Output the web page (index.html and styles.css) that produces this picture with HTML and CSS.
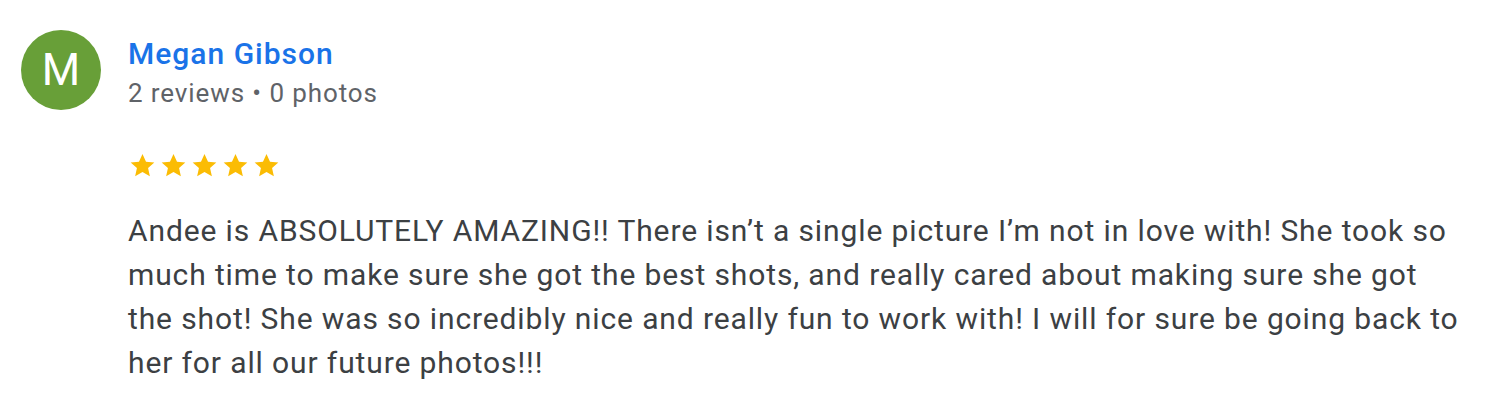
FILE: index.html
```html
<!DOCTYPE html>
<html>
<head>
<meta charset="utf-8">
<link rel="stylesheet" href="styles.css">
</head>
<body>
<div class="review">
  <div class="header">
    <div class="avatar">M</div>
    <div class="meta">
      <div class="name">Megan Gibson</div>
      <div class="sub">2 reviews • 0 photos</div>
    </div>
  </div>
  <div class="body">
    <div class="stars">
      <svg viewBox="0 0 24 24"><path d="M12 2.5l2.9 6.3 6.9.7-5.2 4.6 1.5 6.8L12 17.4l-6.1 3.5 1.5-6.8-5.2-4.6 6.9-.7z"/></svg>
      <svg viewBox="0 0 24 24"><path d="M12 2.5l2.9 6.3 6.9.7-5.2 4.6 1.5 6.8L12 17.4l-6.1 3.5 1.5-6.8-5.2-4.6 6.9-.7z"/></svg>
      <svg viewBox="0 0 24 24"><path d="M12 2.5l2.9 6.3 6.9.7-5.2 4.6 1.5 6.8L12 17.4l-6.1 3.5 1.5-6.8-5.2-4.6 6.9-.7z"/></svg>
      <svg viewBox="0 0 24 24"><path d="M12 2.5l2.9 6.3 6.9.7-5.2 4.6 1.5 6.8L12 17.4l-6.1 3.5 1.5-6.8-5.2-4.6 6.9-.7z"/></svg>
      <svg viewBox="0 0 24 24"><path d="M12 2.5l2.9 6.3 6.9.7-5.2 4.6 1.5 6.8L12 17.4l-6.1 3.5 1.5-6.8-5.2-4.6 6.9-.7z"/></svg>
    </div>
    <p class="text">Andee is ABSOLUTELY AMAZING!! There isn’t a single picture I’m not in love with! She took so much time to make sure she got the best shots, and really cared about making sure she got the shot! She was so incredibly nice and really fun to work with! I will for sure be going back to her for all our future photos!!!</p>
  </div>
</div>
</body>
</html>
```
FILE: styles.css
```css
html, body {
  margin: 0;
  padding: 0;
  background: #ffffff;
}
body {
  font-family: Roboto, "Noto Sans", Arial, sans-serif;
}
.review {
  padding: 30px 0 0 21px;
}
.header {
  display: flex;
  align-items: flex-start;
  gap: 27px;
}
.avatar {
  width: 80px;
  height: 80px;
  border-radius: 50%;
  background: #689f38;
  color: #ffffff;
  font-size: 44px;
  line-height: 80px;
  text-align: center;
  flex: none;
}
.meta {
  padding-top: 4px;
}
.name {
  color: #1a73e8;
  font-size: 30px;
  font-weight: 500;
  line-height: 40px;
  letter-spacing: 1px;
}
.sub {
  color: #5f6368;
  font-size: 26px;
  line-height: 38px;
  letter-spacing: 0.9px;
}
.body {
  padding-left: 107px;
  padding-top: 39px;
}
.stars {
  display: flex;
  gap: 2px;
  height: 30px;
}
.stars svg {
  width: 29px;
  height: 29px;
  fill: #fbbc04;
}
.text {
  margin: 28px 0 0 0;
  color: #3c4043;
  font-size: 30px;
  line-height: 44px;
  letter-spacing: 0.88px;
  width: 1340px;
}
```
